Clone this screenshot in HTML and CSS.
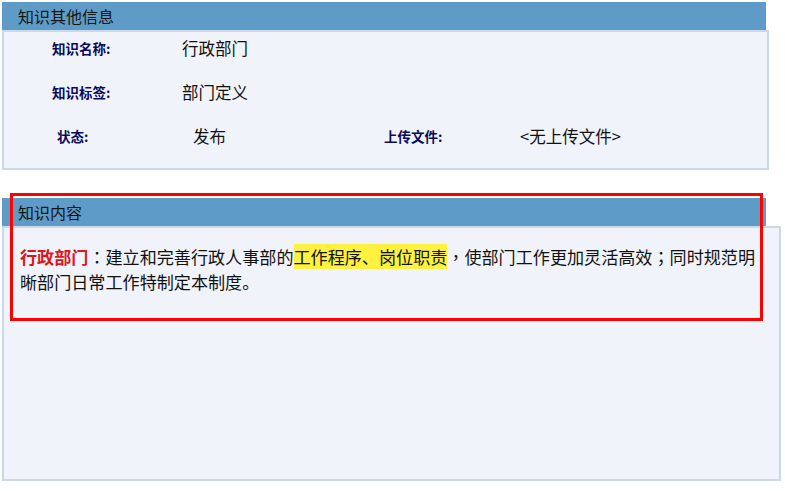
FILE: index.html
```html
<!DOCTYPE html>
<html lang="zh-CN">
<head>
  <meta charset="UTF-8">
  <title>知识信息</title>
  <link rel="stylesheet" href="styles.css">
</head>
<body>
  <div class="page">
    <!-- 其他信息 -->
    <div class="section">
      <div class="section-title">知识其他信息</div>
      <div class="panel info-panel">
        <div class="info-row">
          <span class="label label-wide">知识名称:</span>
          <span class="value">行政部门</span>
        </div>
        <div class="info-row">
          <span class="label label-wide">知识标签:</span>
          <span class="value">部门定义</span>
        </div>
        <div class="info-row row-status">
          <span class="label label-status">状态:</span>
          <span class="value value-status">发布</span>
          <span class="label label-file">上传文件:</span>
          <span class="value">&lt;无上传文件&gt;</span>
        </div>
      </div>
    </div>

    <!-- 知识内容 -->
    <div class="section section-content">
      <div class="section-title">知识内容</div>
      <div class="panel content-panel">
        <p class="content-text"><span class="keyword">行政部门</span><span class="punct" lang="zh-Hant">：</span>建立和完善行政人事部的<span class="mark">工作程序、岗位职责</span><span class="punct" lang="zh-Hant">，</span>使部门工作更加灵活高效<span class="punct" lang="zh-Hant">；</span>同时规范明晰部门日常工作特制定本制度。</p>
      </div>
      <div class="highlight-box"></div>
    </div>
  </div>
</body>
</html>
```

FILE: styles.css
```css
/* 全局 */
body {
  margin: 0;
  background-color: #fff;
  font-family: "Noto Sans CJK SC", "Noto Sans", sans-serif;
  color: #111;
}

.page {
  padding: 2px 0 0 2px;
}

/* 区块 */
.section {
  position: relative;
}

.section-content {
  margin-top: 28px;
}

.section-title {
  width: 748px;
  height: 28px;
  line-height: 28px;
  padding-left: 16px;
  background-color: #5e9cc7;
  font-size: 16px;
  color: #151515;
}

.panel {
  box-sizing: border-box;
  border: 2px solid #cad9ea;
  background-color: #f0f3f9;
}

/* 其他信息 */
.info-panel {
  width: 767px;
  height: 140px;
  padding-bottom: 16px;
  display: flex;
  flex-direction: column;
  gap: 12px;
}

.info-row {
  display: flex;
  align-items: center;
  height: 32px;
}

.label {
  font-size: 13.5px;
  font-weight: bold;
  color: #0a0a5c;
}

.label-wide {
  margin-left: 48px;
  width: 130px;
}

.label-status {
  margin-left: 53px;
  width: 136px;
}

.label-file {
  width: 136px;
}

.value {
  font-size: 16.5px;
  color: #111;
}

.value-status {
  width: 191px;
}

/* 知识内容 */
.content-panel {
  width: 779px;
  height: 255px;
  padding: 16px 0 0 16px;
}

.content-text {
  margin: 0;
  width: 748px;
  font-size: 17.1px;
  line-height: 25px;
  color: #111;
}

.punct {
  font-family: "Noto Sans CJK TC", "Noto Sans CJK SC", sans-serif;
}

.keyword {
  color: #e0141c;
  font-weight: bold;
}

.mark {
  background-color: #fff13f;
}

/* 红框标注 */
.highlight-box {
  position: absolute;
  left: 8px;
  top: -5px;
  width: 747px;
  height: 122px;
  border: 3px solid #ff0000;
}
```
